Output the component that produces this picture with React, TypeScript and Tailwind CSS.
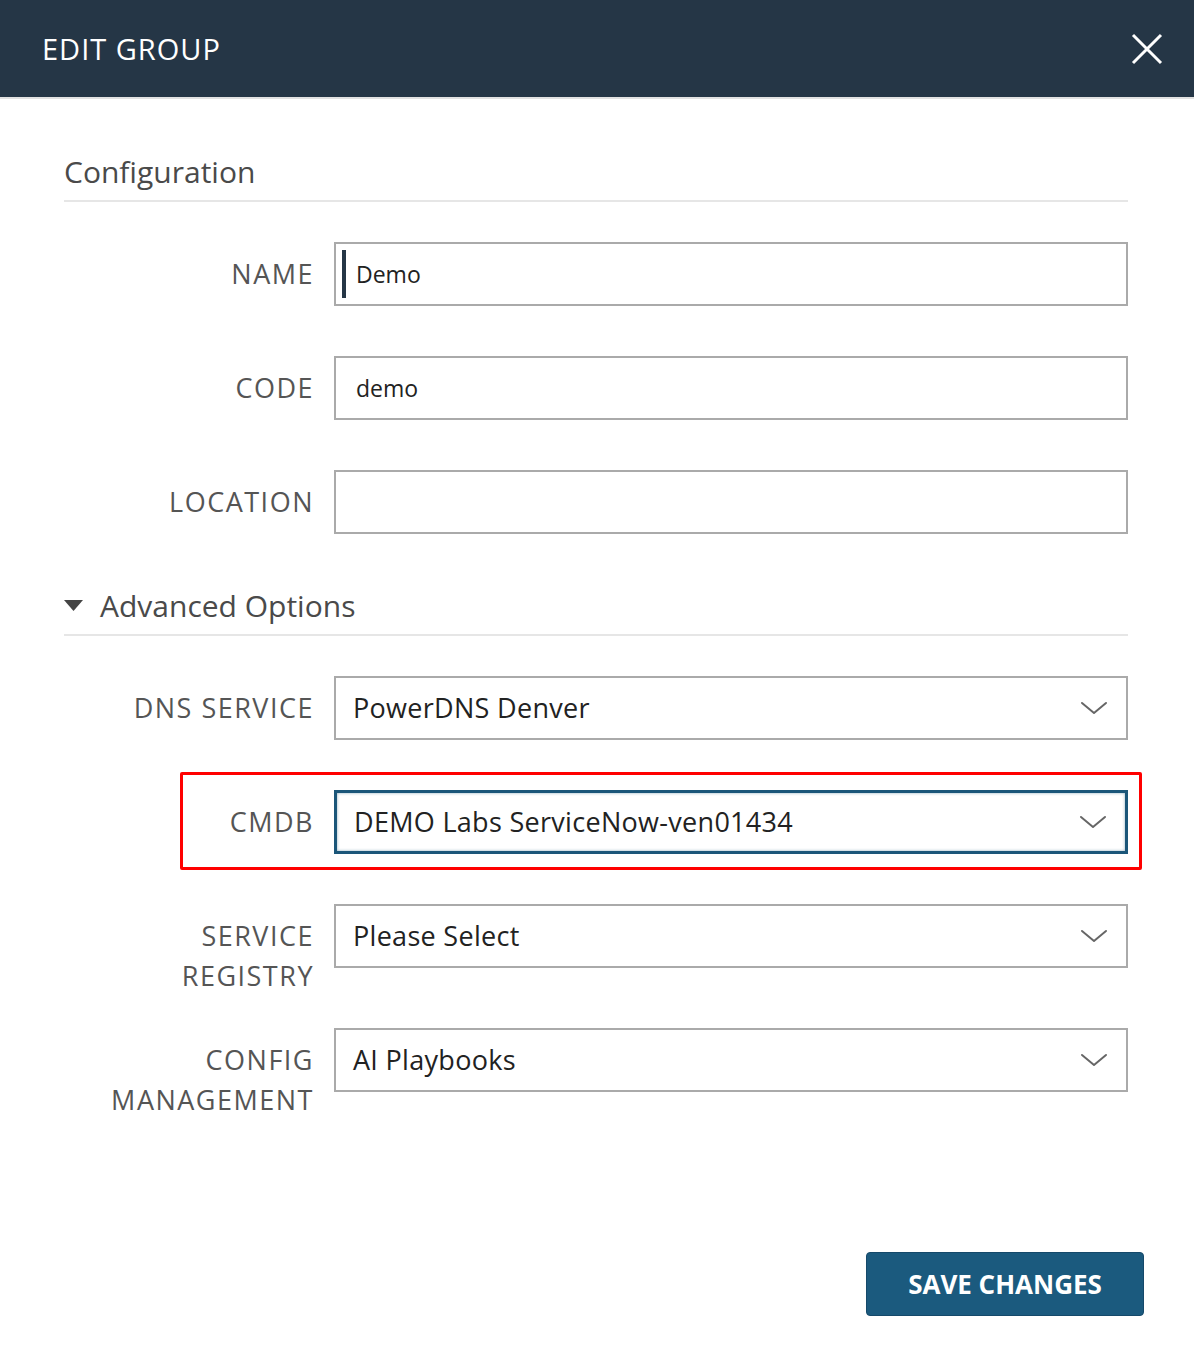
import { ReactNode } from "react"

const font = { fontFamily: "'Open Sans', 'Liberation Sans', sans-serif" }

function Chevron() {
    return (
        <svg width="28" height="16" viewBox="0 0 28 16" fill="none" className="shrink-0">
            <path d="M2 3l12 10L26 3" stroke="#666" strokeWidth={2} strokeLinecap="round" strokeLinejoin="round" />
        </svg>
    )
}

function Row({ label, children, className = "" }: { label: ReactNode, children: ReactNode, className?: string }) {
    return (
        <div className={`relative flex items-start gap-[20px] ${className}`}>
            <div className="w-[250px] shrink-0 pt-[12px] text-right text-[27px] leading-[40px] tracking-[1.5px] text-[#555]">
                {label}
            </div>
            <div className="flex-1">{children}</div>
        </div>
    )
}

function Select({ value, focused = false }: { value: string, focused?: boolean }) {
    return (
        <div
            className={`flex h-[64px] items-center justify-between pl-[17px] pr-[18px] ${focused ? "border-[3px] border-[#1b5679] shadow-[inset_0_0_3px_rgba(27,86,121,0.5)]" : "border-2 border-[#aaa]"}`}
        >
            <span className="text-[27px] tracking-[0.3px] text-[#222]">{value}</span>
            <Chevron />
        </div>
    )
}

export default function App() {
    return (
        <div className="min-h-[1362px] w-[1194px] bg-white" style={font}>
            {/* header */}
            <div className="box-content flex h-[97px] items-center justify-between border-b-2 border-[#e2e2e2] bg-[#253646] pl-[42px] pr-[30px]">
                <div className="text-[29px] tracking-[1px] text-white">EDIT GROUP</div>
                <svg width="34" height="34" viewBox="0 0 34 34">
                    <path d="M3 3l28 28M31 3L3 31" stroke="white" strokeWidth={3} />
                </svg>
            </div>

            <div className="pl-[64px] pr-[66px]">
                <div className="mt-[50px] border-b-2 border-[#e6e6e6] pb-[6px] text-[30px] text-[#4a4a4a]">Configuration</div>

                <div className="mt-[40px] flex flex-col gap-[50px]">
                    <Row label="NAME">
                        <div className="flex h-[64px] items-center border-2 border-[#aaa] pl-[6px]">
                            <div className="h-[48px] w-[4px] bg-[#253646]" />
                            <span className="ml-[10px] text-[23px] text-[#222]">Demo</span>
                        </div>
                    </Row>
                    <Row label="CODE">
                        <div className="flex h-[64px] items-center border-2 border-[#aaa] pl-[20px]">
                            <span className="text-[23px] text-[#222]">demo</span>
                        </div>
                    </Row>
                    <Row label="LOCATION">
                        <div className="h-[64px] border-2 border-[#aaa]" />
                    </Row>
                </div>

                <div className="mt-[49px] flex items-center border-b-2 border-[#e6e6e6] pb-[6px]">
                    <svg width="20" height="14" viewBox="0 0 20 14" className="mr-[16px]">
                        <path d="M0 1h19L9.5 12z" fill="#444" />
                    </svg>
                    <span className="text-[30px] text-[#4a4a4a]">Advanced Options</span>
                </div>

                <div className="mt-[40px] flex flex-col">
                    <Row label="DNS SERVICE" className="mb-[50px]">
                        <Select value="PowerDNS Denver" />
                    </Row>
                    <Row label="CMDB" className="mb-[50px]">
                        <Select value="DEMO Labs ServiceNow-ven01434" focused />
                        <div className="pointer-events-none absolute -top-[18px] -bottom-[16px] left-[116px] -right-[14px] rounded-[2px] border-[3px] border-[#ff0000]" />
                    </Row>
                    <Row label={<>SERVICE<br />REGISTRY</>} className="mb-[32px]">
                        <Select value="Please Select" />
                    </Row>
                    <Row label={<>CONFIG<br />MANAGEMENT</>}>
                        <Select value="AI Playbooks" />
                    </Row>
                </div>

                <div className="-mr-[16px] mt-[132px] flex justify-end">
                    <button className="h-[64px] w-[278px] rounded-[4px] border border-[#15496a] bg-[#1b5a7e] text-[26px] font-bold text-white">
                        SAVE CHANGES
                    </button>
                </div>
            </div>
        </div>
    )
}
